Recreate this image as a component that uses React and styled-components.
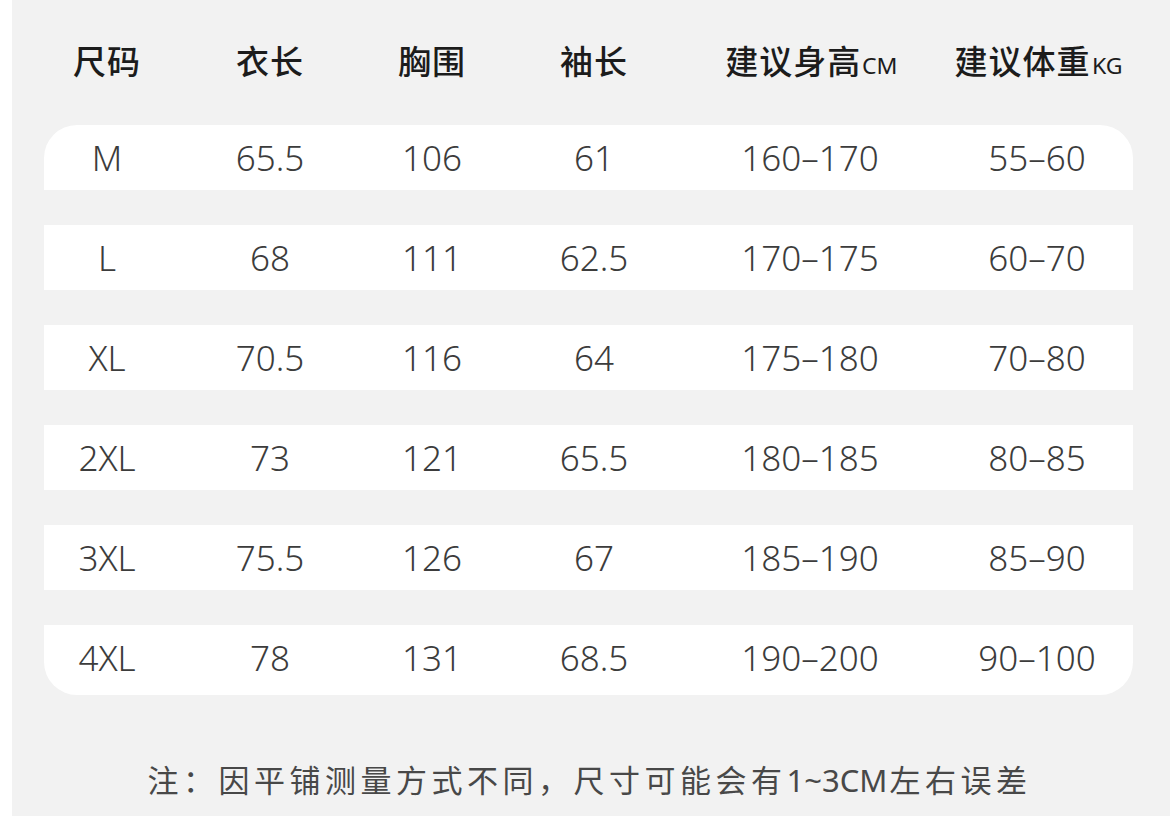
import React from "react";
import styled, { createGlobalStyle } from "styled-components";

const GlobalStyle = createGlobalStyle`
  html, body {
    margin: 0;
    padding: 0;
    background: #ffffff;
  }
  * {
    box-sizing: border-box;
  }
`;

const Panel = styled.div`
    margin-left: 12px;
    width: calc(100% - 12px);
    height: 816px;
    background: #f2f2f2;
    padding-left: 32px;
    overflow: hidden;
`;

const columns = "126px 200px 124px 200px 232px 222px";

const HeaderRow = styled.div`
    display: grid;
    grid-template-columns: ${columns};
    height: 120px;
    align-items: center;
    justify-items: center;
`;

const HeaderCell = styled.div`
    font-family: "Noto Sans CJK SC", "Noto Sans", sans-serif;
    font-size: 33px;
    font-weight: 500;
    color: #1c1c1c;
    letter-spacing: 1px;
    white-space: nowrap;
    display: flex;
    align-items: baseline;
`;

const Unit = styled.span`
    font-family: "Noto Sans", "Liberation Sans", sans-serif;
    font-size: 21px;
    font-weight: 400;
    letter-spacing: 0;
    margin-left: 1px;
    transform: scaleX(1.1);
    transform-origin: left center;
    display: inline-block;
`;

const Table = styled.div`
    width: 1089px;
    margin-top: 5px;
    display: flex;
    flex-direction: column;
    gap: 35px;
`;

const Row = styled.div`
    display: grid;
    grid-template-columns: ${columns};
    height: ${(p) => (p.$last ? "70px" : "65px")};
    padding-bottom: ${(p) => (p.$last ? "5px" : "0")};
    align-items: center;
    justify-items: center;
    background: #ffffff;
    border-radius: ${(p) =>
        p.$first ? "33px 33px 0 0" : p.$last ? "0 0 33px 33px" : "0"};
`;

const Cell = styled.div`
    font-family: "Noto Sans", "Liberation Sans", sans-serif;
    font-size: 35px;
    font-weight: 300;
    color: #3c3c3c;
    white-space: nowrap;
`;

const Note = styled.div`
    margin-top: 64px;
    width: 1089px;
    text-align: center;
    font-family: "Noto Sans CJK SC", "Noto Sans", sans-serif;
    font-size: 31px;
    line-height: 40px;
    letter-spacing: 4.5px;
    color: #484848;
    padding-left: 2px;
`;

const Latin = styled.span`
    font-family: "Noto Sans", "Liberation Sans", sans-serif;
    letter-spacing: 0;
    margin-right: 2px;
`;

const headers = [
    { label: "尺码" },
    { label: "衣长" },
    { label: "胸围" },
    { label: "袖长" },
    { label: "建议身高", unit: "CM" },
    { label: "建议体重", unit: "KG" },
];

const sizes = [
    ["M", "65.5", "106", "61", "160–170", "55–60"],
    ["L", "68", "111", "62.5", "170–175", "60–70"],
    ["XL", "70.5", "116", "64", "175–180", "70–80"],
    ["2XL", "73", "121", "65.5", "180–185", "80–85"],
    ["3XL", "75.5", "126", "67", "185–190", "85–90"],
    ["4XL", "78", "131", "68.5", "190–200", "90–100"],
];

export default function App() {
    return <>
        <GlobalStyle />
        <Panel>
            <HeaderRow>
                {headers.map((h) => (
                    <HeaderCell key={h.label}>
                        {h.label}
                        {h.unit && <Unit>{h.unit}</Unit>}
                    </HeaderCell>
                ))}
            </HeaderRow>
            <Table>
                {sizes.map((row, i) => (
                    <Row key={row[0]} $first={i === 0} $last={i === sizes.length - 1}>
                        {row.map((v, j) => <Cell key={j}>{v}</Cell>)}
                    </Row>
                ))}
            </Table>
            <Note>注：因平铺测量方式不同，尺寸可能会有<Latin>1~3CM</Latin>左右误差</Note>
        </Panel>
    </>
}
